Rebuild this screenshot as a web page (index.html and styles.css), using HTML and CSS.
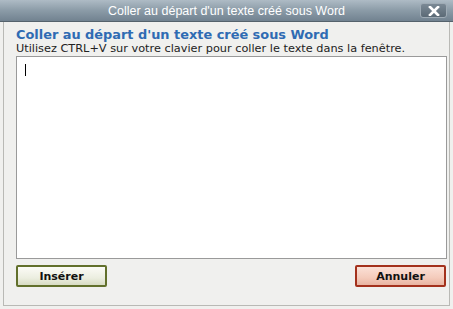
FILE: index.html
```html
<!DOCTYPE html>
<html lang="fr">
<head>
    <meta charset="UTF-8">
    <title>Coller au départ d'un texte créé sous Word</title>
    <link rel="stylesheet" href="styles.css">
</head>
<body>
    <div class="dialog">
        <div class="titlebar">
            <span class="title">Coller au départ d'un texte créé sous Word</span>
            <button class="close" title="Fermer">
                <svg width="12" height="10" viewBox="0 0 12 10"><path d="M2 1 L10 9 M10 1 L2 9" stroke="#fff" stroke-width="2.6" stroke-linecap="square"/></svg>
            </button>
        </div>
        <div class="content">
            <h3>Coller au départ d'un texte créé sous Word</h3>
            <p>Utilisez CTRL+V sur votre clavier pour coller le texte dans la fenêtre.</p>
            <div class="paste-area"><span class="caret"></span></div>
            <div class="actions">
                <button class="btn btn-ok">Insérer</button>
                <button class="btn btn-cancel">Annuler</button>
            </div>
        </div>
    </div>
</body>
</html>
```

FILE: styles.css
```css
body {
    margin: 0;
    background-color: #fff;
    font-family: "DejaVu Sans", Verdana, sans-serif;
}
.dialog {
    width: 453px;
    height: 309px;
    background-color: #f0f0ee;
    box-sizing: border-box;
    display: flex;
    flex-direction: column;
}
.titlebar {
    height: 21px;
    background: linear-gradient(#aebbc5, #8b9ba7 50%, #718290);
    border-bottom: 1px solid #55626c;
    display: flex;
    align-items: center;
    justify-content: center;
    position: relative;
}
.title {
    font-family: "Liberation Sans", Arial, sans-serif;
    font-size: 12.5px;
    color: #fff;
}
.close {
    position: absolute;
    right: 6px;
    top: 3px;
    width: 27px;
    height: 15px;
    padding: 0;
    border: 1px solid #9fabb5;
    border-radius: 3px;
    background: linear-gradient(#7b8995, #5b6a76);
    display: flex;
    align-items: center;
    justify-content: center;
}
.content {
    flex: 1;
    margin: 0 3px 3px 3px;
    border: 1px solid #b9b9b5;
    border-top: none;
    padding: 5px 2px 0 12px;
    display: flex;
    flex-direction: column;
}
.content h3 {
    margin: 0;
    font-size: 12.9px;
    color: #2f6bb3;
    line-height: 15px;
}
.content p {
    margin: 0;
    font-size: 11.3px;
    color: #222;
    line-height: 13px;
}
.paste-area {
    height: 203px;
    margin-top: 1px;
    border: 1px solid #9a9a9a;
    background-color: #fff;
    padding: 7px 8px;
    box-sizing: border-box;
}
.caret {
    display: block;
    width: 1px;
    height: 12px;
    background-color: #000;
}
.actions {
    display: flex;
    justify-content: space-between;
    margin-top: 6px;
    padding-right: 1px;
}
.btn {
    width: 91px;
    height: 22px;
    font-family: "DejaVu Sans", Verdana, sans-serif;
    font-size: 11px;
    font-weight: bold;
    color: #111;
    border-radius: 2px;
    padding: 0;
}
.btn-ok {
    border: 2px solid #62702c;
    background: linear-gradient(#fbfbf6, #eceee0 60%, #d8dcc4);
}
.btn-cancel {
    border: 2px solid #a3311c;
    background: linear-gradient(#fbe0d6, #f4cbbb 60%, #e9b4a2);
}
```
